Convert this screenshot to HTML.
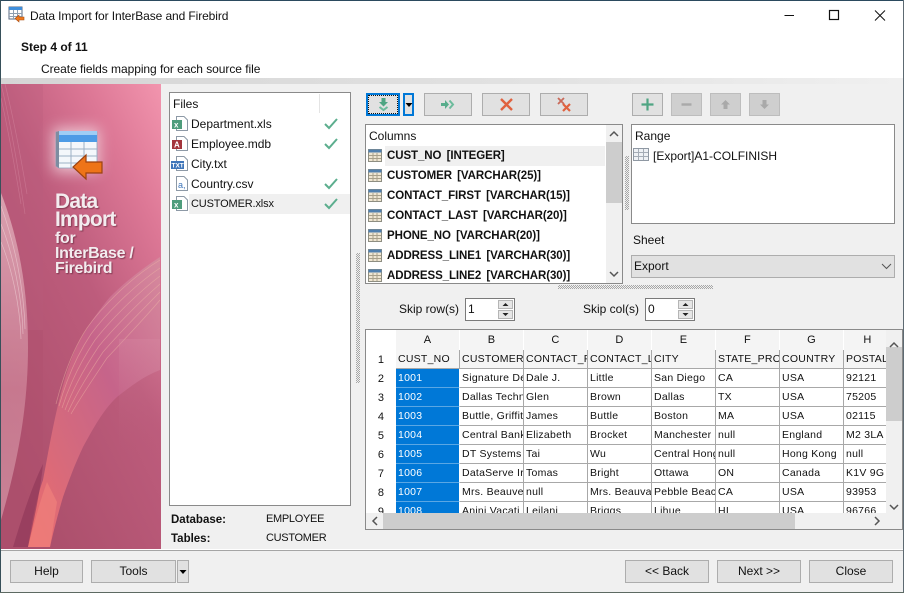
<!DOCTYPE html>
<html><head><meta charset="utf-8"><style>
html,body{margin:0;padding:0;width:904px;height:593px;overflow:hidden;background:#f0f0f0}
body{position:relative;font:12px "Liberation Sans",sans-serif;color:#111}
.a{position:absolute}
.t{position:absolute;white-space:nowrap;line-height:16px}
.btn{position:absolute;box-sizing:border-box;background:#e1e1e1;border:1px solid #adadad;text-align:center;line-height:20px}
.box{position:absolute;box-sizing:border-box;background:#fff;border:1px solid #8a8a8a}
.bold{font-weight:bold}
.col{font-size:11.5px;letter-spacing:-.08px;word-spacing:-.5px}
table{border-collapse:separate;border-spacing:0;table-layout:fixed;font-size:10.5px;letter-spacing:.25px}
td{height:18px;padding:0 0 0 2px;border-right:1px solid #a8a8a8;border-bottom:1px solid #a8a8a8;overflow:hidden;white-space:nowrap;line-height:18px;box-sizing:content-box}
tr td:first-child{text-align:center;background:#fff;border-right:none;border-bottom:none;padding:0;font-size:11px}
tr.h td{height:20px;line-height:20px;background:#f4f4f4;text-align:center;border:none;border-right:1px solid #fff;padding:0;font-size:11px}
tr.h td:first-child{background:#fff}
tr.f td{background:#f5f5f5}
tr.f td:first-child{background:#fff}
td.s{background:#0078d7;color:#fff;border-bottom:1px solid #5aa7e4;border-right:1px solid #fff}
</style></head><body>
<div class="a" style="left:0;top:0;width:904px;height:78px;background:#fff"></div>
<div class="a" style="left:0;top:78px;width:904px;height:6px;background:linear-gradient(90deg,#d5d5d5,#e2e2e2 60%,#f0f0f0)"></div>

<svg class="a" style="left:8px;top:6px" width="18" height="18" viewBox="0 0 18 18"><rect x="1" y="1" width="13" height="12" fill="#fff" stroke="#5a6a80"/><rect x="1" y="1" width="13" height="3" fill="#3f8fdc"/><path d="M1 7.500H14M1 10.500H14M5.500 4V13M9.500 4V13" stroke="#8fa0b2" fill="none"/><path d="M16 11H11V9L7 12.500 11 16V14H16Z" fill="#ef7a1d" stroke="#a84a10" stroke-width=".6"/></svg>
<div class="t" style="left:30px;top:8px;letter-spacing:-.1px">Data Import for InterBase and Firebird</div>
<svg class="a" style="left:780px;top:8px" width="110" height="16"><path d="M4.500 7.500H14" stroke="#111" stroke-width="1" fill="none"/><rect x="49.500" y="2.500" width="9" height="9" stroke="#111" fill="none" stroke-width="1.200"/><path d="M95 2.500L105 12.500M105 2.500L95 12.500" stroke="#111" fill="none"/></svg>
<div class="t bold" style="left:21px;top:39px">Step 4 of 11</div>
<div class="t" style="left:41px;top:61px;letter-spacing:-.05px">Create fields mapping for each source file</div>

<svg class="a" style="left:1px;top:84px" width="160" height="465" viewBox="0 0 160 465">
<defs>
<linearGradient id="bg" x1="1" y1="0" x2="0.3" y2="1"><stop offset="0" stop-color="#f295ae"/><stop offset=".22" stop-color="#dd7896"/><stop offset=".5" stop-color="#bd5c7c"/><stop offset="1" stop-color="#ab4f6b"/></linearGradient>
<linearGradient id="sw" x1="0" y1="1" x2="1" y2="0"><stop offset="0" stop-color="#ec6c6c"/><stop offset=".3" stop-color="#d66a7c"/><stop offset=".6" stop-color="#c6648a"/><stop offset="1" stop-color="#d68a9e"/></linearGradient>
<linearGradient id="p" x1="0" y1="0" x2="0" y2="1"><stop offset="0" stop-color="#d88aa4" stop-opacity=".7"/><stop offset="1" stop-color="#b25a76" stop-opacity="0"/></linearGradient>
<linearGradient id="lf" x1="0" y1="0" x2="0" y2="1"><stop offset="0" stop-color="#f0d0d4" stop-opacity=".6"/><stop offset=".6" stop-color="#e4a8b6" stop-opacity=".45"/><stop offset="1" stop-color="#dba4b2" stop-opacity=".6"/></linearGradient>
</defs>
<rect width="160" height="465" fill="url(#bg)"/>
<rect x="0" y="0" width="42" height="246" fill="#b65a7a" opacity=".25"/>
<path d="M42 246H0V465H42Z" fill="#ae4f6d" opacity=".4"/>
<path d="M0 0C10 40 18 90 24 130M0 14C8 50 15 90 20 120M4 0C14 40 21 80 26 110" stroke="#e8a8bc" fill="none" stroke-width=".7" opacity=".3"/>
<path d="M0 109C16 150 27 200 27 263S16 380 0 436Z" fill="url(#lf)"/>
<path d="M0 122C14 160 23 205 24 245M0 140C12 170 21 212 22 250M0 158C10 182 19 220 20 255" stroke="#f8e2e4" fill="none" stroke-width=".7" opacity=".5"/>
<path d="M27 463C32 430 37 410 42 396C47 370 52 340 59 313C66 285 72 270 79 256C88 240 98 226 109 213C125 197 142 184 159 173V286C143 292 130 302 116 313C102 326 92 345 82 363C74 380 68 396 62 413C57 430 53 445 49 463Z" fill="url(#sw)"/>
<path d="M55 320C64 285 74 262 86 244C100 224 128 195 159 176M58 322C67 290 78 268 90 250C104 231 131 203 159 184M61 324C70 296 82 274 94 256C108 238 134 211 159 192M64 326C73 302 86 280 98 262C112 245 137 219 159 200M67 328C76 308 90 286 102 268C116 252 140 227 159 208M70 330C79 314 94 292 106 274C120 259 143 235 159 216" stroke="#f4c0a8" fill="none" stroke-width=".7" opacity=".45"/>
<path d="M12 463C22 430 32 400 42 380C39 410 33 435 27 463Z" fill="#92395a" opacity=".7"/>
<path d="M27 463C33 440 38 420 46 398L56 418 49 463Z" fill="#f0807c" opacity=".7"/>
<rect x="118" y="255" width="41" height="120" fill="url(#p)" opacity=".45"/>
<rect x="52" y="44" width="46" height="44" fill="#fff" opacity=".6" style="filter:blur(7px)"/>
<path d="M55 48H96V84H58L55 82Z" fill="#f4f7fb" stroke="#8ca3bd" stroke-width=".8"/>
<path d="M58 47H96V58H58Z" fill="#4d9be6"/><path d="M58 47H96V51H58Z" fill="#9fcdf5"/>
<path d="M58 65H96M58 72H96M58 79H96M70 58V84M83 58V84" stroke="#9db1c6" fill="none"/>
<path d="M55 48L58 47V84L55 82Z" fill="#7d8da1"/>
<path d="M101 78H85V71L72 83 85 95V89H101Z" fill="#ee7418" stroke="#9c4210" stroke-width="1.200"/>
<g fill="#f3ecef" style="font-family:'Liberation Sans',sans-serif;filter:drop-shadow(1px 1px .6px rgba(90,30,50,.6))">
<text x="54" y="124" font-size="21" font-weight="bold" letter-spacing="-.8">Data</text>
<text x="54" y="142" font-size="21" font-weight="bold" letter-spacing="-.8">Import</text>
<text x="54" y="159" font-size="16" font-weight="bold" letter-spacing="-.3">for</text>
<text x="54" y="174" font-size="16" font-weight="bold" letter-spacing="-.3">InterBase /</text>
<text x="54" y="189" font-size="16" font-weight="bold" letter-spacing="-.3">Firebird</text>
</g>
</svg>

<!-- Files -->
<div class="box" style="left:169px;top:92px;width:182px;height:414px"></div>
<div class="a" style="left:319px;top:94px;width:1px;height:19px;background:#e4e4e4"></div>
<div class="t" style="left:173px;top:96px">Files</div>
<div class="a" style="left:189px;top:194px;width:161px;height:20px;background:#f0f0f0"></div>
<svg class="a" style="left:171px;top:115px" width="180" height="100" viewBox="0 0 180 100">
<g fill="#fff" stroke="#8d99a6"><path d="M5.500 1.500H13L16.500 5V15.500H5.500Z"/><path d="M5.500 21.500H13L16.500 25V35.500H5.500Z"/><path d="M5.500 41.500H13L16.500 45V55.500H5.500Z"/><path d="M5.500 61.500H13L16.500 65V75.500H5.500Z"/><path d="M5.500 81.500H13L16.500 85V95.500H5.500Z"/></g>
<rect x="1" y="5" width="10" height="9" fill="#4f9d7c"/><rect x="1" y="25" width="10" height="9" fill="#a3353d"/><rect x="0" y="46" width="13" height="8" fill="#3f76ba"/><rect x="1" y="85" width="10" height="9" fill="#4f9d7c"/>
<g fill="#fff" font-family="Liberation Sans" font-weight="bold" font-size="8"><text x="3" y="12.500">x</text><text x="3" y="32.500">A</text><text x="0.500" y="52.500" font-size="6.500">TXT</text><text x="3" y="92.500">x</text></g>
<text x="7" y="73" font-size="9" fill="#3f76ba" font-family="Liberation Sans">a,</text>
<g fill="none" stroke="#5cae8e" stroke-width="2"><path d="M154 9L158 13 166 4"/><path d="M154 29L158 33 166 24"/><path d="M154 69L158 73 166 64"/><path d="M154 89L158 93 166 84"/></g>
</svg>
<div class="t" style="left:191px;top:116px">Department.xls</div>
<div class="t" style="left:191px;top:136px">Employee.mdb</div>
<div class="t" style="left:191px;top:156px">City.txt</div>
<div class="t" style="left:191px;top:176px">Country.csv</div>
<div class="t" style="left:191px;top:196px;font-size:11px;letter-spacing:-.15px">CUSTOMER.xlsx</div>
<div class="t bold" style="left:171px;top:512px;font-size:11.500px">Database:</div>
<div class="t" style="left:266px;top:511px;font-size:11px;letter-spacing:-.3px">EMPLOYEE</div>
<div class="t bold" style="left:171px;top:531px;font-size:11.500px">Tables:</div>
<div class="t" style="left:266px;top:530px;font-size:11px;letter-spacing:-.3px">CUSTOMER</div>

<!-- toolbar -->
<div class="a" style="box-sizing:border-box;left:366px;top:93px;width:34px;height:23px;background:#e1e1e1;border:2px solid #0078d7;outline:1px dotted #111;outline-offset:-3px"></div>
<div class="a" style="box-sizing:border-box;left:403px;top:93px;width:11px;height:23px;background:#e1e1e1;border:2px solid #0078d7"></div>
<svg class="a" style="left:366px;top:93px" width="48" height="23"><path d="M15.500 5H19.500V9H22L17.500 13.500 13 9H15.500Z" fill="#4fa583"/><path d="M13.500 14L17.500 17 21.500 14" stroke="#6cbb9c" stroke-width="2" fill="none"/><path d="M39.500 10H46.500L43 14Z" fill="#000"/></svg>
<div class="btn" style="left:424px;top:93px;width:48px;height:23px"></div>
<div class="btn" style="left:482px;top:93px;width:48px;height:23px"></div>
<div class="btn" style="left:540px;top:93px;width:48px;height:23px"></div>
<svg class="a" style="left:424px;top:93px" width="164" height="23"><path d="M17 10H21V7L25 11.500 21 16V13H17Z" fill="#58ad8c"/><path d="M25.500 7.500L29 11.500 25.500 15.500" stroke="#6cbb9c" stroke-width="2" fill="none"/>
<path d="M77 6L88 17M88 6L77 17" stroke="#e0623f" stroke-width="2.400" fill="none"/>
<path d="M134 5L140 11M140 5L134 11" stroke="#c96a5a" stroke-width="1.800" fill="none"/><path d="M139 11L146 18M146 11L139 18" stroke="#e0623f" stroke-width="2.200" fill="none"/></svg>
<div class="btn" style="left:632px;top:93px;width:31px;height:23px"></div>
<div class="btn" style="left:671px;top:93px;width:31px;height:23px;background:#cfcfcf;border-color:#bdbdbd"></div>
<div class="btn" style="left:710px;top:93px;width:31px;height:23px;background:#cfcfcf;border-color:#bdbdbd"></div>
<div class="btn" style="left:749px;top:93px;width:31px;height:23px;background:#cfcfcf;border-color:#bdbdbd"></div>
<svg class="a" style="left:632px;top:93px" width="148" height="23"><path d="M15.500 5.500V17.500M9.500 11.500H21.500" stroke="#4fa583" stroke-width="2.200" fill="none"/><path d="M49.500 11.500H59.500" stroke="#a9a9a9" stroke-width="2.400" fill="none"/><path d="M93.500 7L98 11.500H95.500V16H91.500V11.500H89Z" fill="#a9a9a9"/><path d="M132.500 16L128 11.500H130.500V7H134.500V11.500H137Z" fill="#a9a9a9"/></svg>

<!-- Columns -->
<div class="box" style="left:365px;top:124px;width:258px;height:160px"></div>
<div class="a" style="left:385px;top:146px;width:220px;height:20px;background:#f0f0f0"></div>
<div class="a" style="left:606px;top:125px;width:16px;height:158px;background:#f0f0f0"></div>
<div class="a" style="left:606px;top:142px;width:16px;height:61px;background:#cdcdcd"></div>
<svg class="a" style="left:606px;top:125px" width="16" height="158"><path d="M4 11L8 7 12 11" stroke="#555" stroke-width="1.500" fill="none"/><path d="M4 147L8 151 12 147" stroke="#555" stroke-width="1.500" fill="none"/></svg>
<div class="t" style="left:369px;top:128px">Columns</div>
<svg class="a" style="left:368px;top:148px" width="14" height="134" viewBox="0 0 14 134">
<defs><g id="ic"><rect x=".5" y=".5" width="13" height="12" fill="#efe6d2" stroke="#8e8e82"/><rect x=".5" y=".5" width="13" height="3" fill="#4f7fae"/><path d="M1 6.500H13M1 9.500H13M5 4V12M9 4V12" stroke="#a8a08a" fill="none"/></g></defs>
<use href="#ic" y="1"/><use href="#ic" y="21"/><use href="#ic" y="41"/><use href="#ic" y="61"/><use href="#ic" y="81"/><use href="#ic" y="101"/><use href="#ic" y="121"/></svg>
<div class="t bold col" style="left:387px;top:148px">CUST_NO&nbsp; [INTEGER]</div>
<div class="t bold col" style="left:387px;top:168px">CUSTOMER&nbsp; [VARCHAR(25)]</div>
<div class="t bold col" style="left:387px;top:188px">CONTACT_FIRST&nbsp; [VARCHAR(15)]</div>
<div class="t bold col" style="left:387px;top:208px">CONTACT_LAST&nbsp; [VARCHAR(20)]</div>
<div class="t bold col" style="left:387px;top:228px">PHONE_NO&nbsp; [VARCHAR(20)]</div>
<div class="t bold col" style="left:387px;top:248px">ADDRESS_LINE1&nbsp; [VARCHAR(30)]</div>
<div style="position:absolute;left:387px;top:266px;width:218px;height:17px;overflow:hidden"><div class="t bold col" style="left:0;top:2px">ADDRESS_LINE2&nbsp; [VARCHAR(30)]</div></div>

<!-- splitters -->
<svg class="a" style="left:0;top:0" width="904" height="593" shape-rendering="crispEdges">
<defs><pattern id="chk" width="2" height="2" patternUnits="userSpaceOnUse"><rect width="1" height="1" fill="#a6a6a6"/><rect x="1" y="1" width="1" height="1" fill="#a6a6a6"/></pattern></defs>
<rect x="356" y="253" width="4" height="130" fill="url(#chk)"/>
<rect x="625" y="156" width="4" height="54" fill="url(#chk)"/>
<rect x="558" y="285" width="155" height="4" fill="url(#chk)"/>
</svg>

<!-- Range -->
<div class="box" style="left:631px;top:124px;width:264px;height:100px"></div>
<div class="t" style="left:635px;top:128px">Range</div>
<svg class="a" style="left:633px;top:148px" width="16" height="14"><rect x=".5" y=".5" width="15" height="12" fill="#eef1f5" stroke="#8f98a3"/><path d="M1 4.500H15M1 8.500H15M5.500 1V12M10.500 1V12" stroke="#a4acb6" fill="none"/></svg>
<div class="t" style="left:653px;top:148px">[Export]A1-COLFINISH</div>
<div class="t" style="left:633px;top:232px">Sheet</div>
<div class="a" style="box-sizing:border-box;left:631px;top:255px;width:264px;height:23px;background:#e1e1e1;border:1px solid #adadad"></div>
<div class="t" style="left:634px;top:258px">Export</div>
<svg class="a" style="left:880px;top:260px" width="12" height="12"><path d="M2 4L6.500 8.500 11 4" stroke="#555" fill="none"/></svg>

<!-- Skip -->
<div class="t" style="left:399px;top:301px">Skip row(s)</div>
<div class="box" style="left:465px;top:298px;width:50px;height:23px;border-color:#7a7a7a"></div>
<div class="t" style="left:468px;top:301px">1</div>
<div class="t" style="left:583px;top:301px">Skip col(s)</div>
<div class="box" style="left:645px;top:298px;width:50px;height:23px;border-color:#7a7a7a"></div>
<div class="t" style="left:648px;top:301px">0</div>
<svg class="a" style="left:498px;top:300px" width="15" height="19"><rect x="0.500" y="0.500" width="14" height="8" fill="#e6e6e6" stroke="#b5b5b5"/><rect x="0.500" y="10.500" width="14" height="8" fill="#e6e6e6" stroke="#b5b5b5"/><path d="M4.500 6L7.500 3 10.500 6ZM4.500 13H10.500L7.500 16Z" fill="#222"/></svg>
<svg class="a" style="left:678px;top:300px" width="15" height="19"><rect x="0.500" y="0.500" width="14" height="8" fill="#e6e6e6" stroke="#b5b5b5"/><rect x="0.500" y="10.500" width="14" height="8" fill="#e6e6e6" stroke="#b5b5b5"/><path d="M4.500 6L7.500 3 10.500 6ZM4.500 13H10.500L7.500 16Z" fill="#222"/></svg>

<!-- Grid -->
<div class="box" style="left:365px;top:329px;width:538px;height:201px"></div>
<div style="position:absolute;left:366px;top:330px;width:520px;height:183px;overflow:hidden">
<table style="width:526px">
<colgroup><col style="width:30px"><col style="width:64px"><col style="width:64px"><col style="width:64px"><col style="width:64px"><col style="width:64px"><col style="width:64px"><col style="width:64px"><col style="width:48px"></colgroup>
<tr class="h"><td>&nbsp;</td><td>A</td><td>B</td><td>C</td><td>D</td><td>E</td><td>F</td><td>G</td><td>H</td></tr>
<tr class="f"><td>1</td><td>CUST_NO</td><td>CUSTOMER</td><td>CONTACT_F</td><td>CONTACT_L</td><td>CITY</td><td>STATE_PRO</td><td>COUNTRY</td><td>POSTAL</td></tr>
<tr><td>2</td><td class="s">1001</td><td>Signature De</td><td>Dale J.</td><td>Little</td><td>San Diego</td><td>CA</td><td>USA</td><td>92121</td></tr>
<tr><td>3</td><td class="s">1002</td><td>Dallas Techn</td><td>Glen</td><td>Brown</td><td>Dallas</td><td>TX</td><td>USA</td><td>75205</td></tr>
<tr><td>4</td><td class="s">1003</td><td>Buttle, Griffit</td><td>James</td><td>Buttle</td><td>Boston</td><td>MA</td><td>USA</td><td>02115</td></tr>
<tr><td>5</td><td class="s">1004</td><td>Central Bank</td><td>Elizabeth</td><td>Brocket</td><td>Manchester</td><td>null</td><td>England</td><td>M2 3LA</td></tr>
<tr><td>6</td><td class="s">1005</td><td>DT Systems</td><td>Tai</td><td>Wu</td><td>Central Hong</td><td>null</td><td>Hong Kong</td><td>null</td></tr>
<tr><td>7</td><td class="s">1006</td><td>DataServe Ir</td><td>Tomas</td><td>Bright</td><td>Ottawa</td><td>ON</td><td>Canada</td><td>K1V 9G</td></tr>
<tr><td>8</td><td class="s">1007</td><td>Mrs. Beauve</td><td>null</td><td>Mrs. Beauva</td><td>Pebble Beac</td><td>CA</td><td>USA</td><td>93953</td></tr>
<tr><td>9</td><td class="s">1008</td><td>Anini Vacati</td><td>Leilani</td><td>Briggs</td><td>Lihue</td><td>HI</td><td>USA</td><td>96766</td></tr>
</table></div>
<div class="a" style="left:886px;top:330px;width:16px;height:183px;background:#f0f0f0"></div>
<div class="a" style="left:886px;top:347px;width:16px;height:74px;background:#cdcdcd"></div>
<div class="a" style="left:366px;top:513px;width:536px;height:16px;background:#f0f0f0"></div>
<div class="a" style="left:383px;top:513px;width:412px;height:16px;background:#cdcdcd"></div>
<svg class="a" style="left:366px;top:330px" width="536" height="199"><path d="M524 17L528 13 532 17M524 175L528 179 532 175" stroke="#555" stroke-width="1.500" fill="none"/><path d="M11 187L7 191 11 195M509 187L513 191 509 195" stroke="#555" stroke-width="1.500" fill="none"/></svg>

<!-- bottom -->
<div class="a" style="left:1px;top:549px;width:903px;height:1px;background:#fff"></div>
<div class="a" style="left:1px;top:550px;width:903px;height:1px;background:#a5a5a5"></div>
<div class="btn" style="left:10px;top:560px;width:73px;height:23px">Help</div>
<div class="btn" style="left:91px;top:560px;width:85px;height:23px">Tools</div>
<div class="btn" style="left:177px;top:560px;width:12px;height:23px"></div>
<svg class="a" style="left:177px;top:560px" width="12" height="23"><path d="M2.500 10H9.500L6 14Z" fill="#000"/></svg>
<div class="btn" style="left:625px;top:560px;width:84px;height:23px">&lt;&lt; Back</div>
<div class="btn" style="left:717px;top:560px;width:84px;height:23px">Next &gt;&gt;</div>
<div class="btn" style="left:809px;top:560px;width:84px;height:23px">Close</div>

<!-- window frame -->
<div class="a" style="left:0;top:0;width:904px;height:1px;background:#2b4a5e"></div>
<div class="a" style="left:0;top:0;width:1px;height:593px;background:#37505a"></div>
<div class="a" style="left:903px;top:0;width:1px;height:593px;background:#5d6a72"></div>
<div class="a" style="left:0;top:592px;width:904px;height:1px;background:#5d6a62"></div>
</body></html>
